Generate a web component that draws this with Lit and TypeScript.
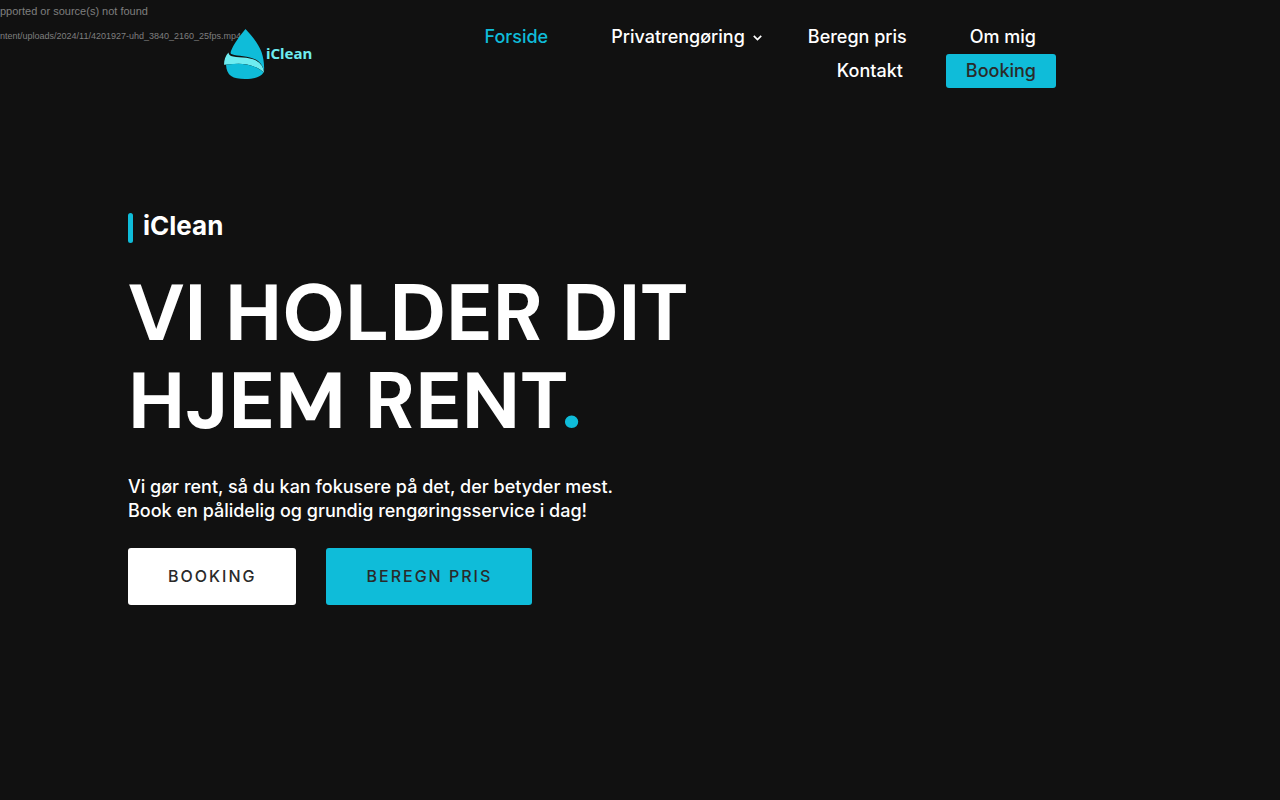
import { LitElement, html, css, svg } from "lit";
import { customElement } from "lit/decorators.js";

const links = [
  { label: "Forside", kind: "active" },
  { label: "Privatrengøring", kind: "parent" },
  { label: "Beregn pris", kind: "" },
  { label: "Om mig", kind: "" },
  { label: "Kontakt", kind: "" },
  { label: "Booking", kind: "cta" },
];

const chevron = svg`<svg class="chevron" viewBox="0 0 9 6" aria-hidden="true">
  <path d="M0.800 0.800l3.700 3.700 3.700-3.700" fill="none" stroke="currentColor" stroke-width="1.700"/>
</svg>`;

@customElement("site-header")
export class SiteHeader extends LitElement {
  static styles = css`
    :host {
      display: block;
      position: relative;
    }
    .bar {
      width: 65%;
      margin: 0 auto;
      padding: 20px 0;
      display: flex;
      justify-content: space-between;
      align-items: center;
    }
    .logo {
      display: flex;
      align-items: center;
      text-decoration: none;
      color: #6eecf0;
      font: 700 15px/20px "Noto Sans", "Open Sans", sans-serif;
    }
    .name {
      padding-bottom: 2px;
    }
    .drop {
      width: 42px;
      height: 52px;
      display: block;
    }
    .nav {
      width: 75%;
    }
    .menu {
      margin: 0;
      padding: 0;
      list-style: none;
      display: flex;
      flex-wrap: wrap;
      justify-content: flex-end;
      column-gap: 23px;
    }
    .link {
      display: block;
      position: relative;
      padding: 0 20px;
      border-radius: 3px;
      color: #fff;
      font: 500 18px/34px Inter, sans-serif;
      text-decoration: none;
      white-space: nowrap;
    }
    .active {
      color: #0fbcd9;
    }
    .cta {
      background: #0fbcd9;
      color: #2a2a2a;
    }
    .chevron {
      position: absolute;
      right: 3px;
      top: 15px;
      width: 9px;
      height: 6px;
    }
  `;

  render() {
    return html`
      <header class="bar">
        <a class="logo" href="#">
          <svg class="drop" viewBox="0 0 42 52" aria-hidden="true">
            <path fill="#0fbcd9" d="M21.500 1C15.500 8 9.500 16.500 7 23C6.300 25 6.500 25.600 8 26.200C14 28.400 27 27.500 34 33C38 36 39.500 40 40 44C40.500 36 39.500 30 37.500 24C34 15 27.500 7.500 21.500 1Z"/>
            <path fill="#6eecf0" d="M4.500 24.500C1.500 27.500 0 32 0 36.800C7 36.500 14 34.800 23 36.600C30 38 36.500 41 40 44.800C39.500 39 37 35.500 32 32.500C25 28.500 12 30 7 28C5.500 27.300 4.500 26 4.500 24.500Z"/>
            <path fill="#0fbcd9" d="M2 36.500C8 36.800 13 34.900 22 36.400C30 37.700 36 41 39.500 44.500C37 49 30 51 21 51C9 51 2.500 48 2 36.500Z"/>
          </svg>
          <span class="name">iClean</span>
        </a>
        <nav class="nav">
          <ul class="menu">
            ${links.map(
              (l) => html`<li>
                <a class="link ${l.kind}" href="#">${l.label}${l.kind === "parent" ? chevron : ""}</a>
              </li>`
            )}
          </ul>
        </nav>
      </header>
    `;
  }
}

@customElement("site-hero")
export class SiteHero extends LitElement {
  static styles = css`
    :host {
      display: block;
      width: 80%;
      margin: 0 auto;
      padding-top: 105px;
      color: #fff;
      font-family: Inter, sans-serif;
    }
    .brand {
      display: flex;
      gap: 10px;
      margin: 0;
      font-size: 26px;
      line-height: 26px;
      font-weight: 700;
    }
    .brand::before {
      content: "";
      width: 5px;
      height: 30px;
      border-radius: 3px;
      background: #0fbcd9;
    }
    .title {
      max-width: 620px;
      margin: 26px 0 0;
      font-family: "DM Sans", Inter, sans-serif;
      font-size: 80px;
      line-height: 88px;
      font-weight: 700;
      text-transform: uppercase;
    }
    .dot {
      color: #0fbcd9;
    }
    .lead {
      max-width: 520px;
      margin: 30px 0 0;
      font-size: 18px;
      line-height: 24px;
      font-weight: 500;
    }
    .actions {
      display: flex;
      gap: 30px;
      margin-top: 25px;
    }
    .button {
      padding: 20px 40px;
      border-radius: 3px;
      background: #fff;
      color: #2a2a2a;
      font-size: 16px;
      line-height: 17px;
      font-weight: 500;
      letter-spacing: 2px;
      text-transform: uppercase;
      text-decoration: none;
    }
    .primary {
      background: #0fbcd9;
    }
  `;

  render() {
    return html`
      <p class="brand">iClean</p>
      <h1 class="title">Vi holder dit hjem rent<span class="dot">.</span></h1>
      <p class="lead">
        Vi gør rent, så du kan fokusere på det, der betyder mest.<br />Book en pålidelig og grundig
        rengøringsservice i dag!
      </p>
      <div class="actions">
        <a class="button" href="#">Booking</a>
        <a class="button primary" href="#">Beregn pris</a>
      </div>
    `;
  }
}

@customElement("app-root")
export class AppRoot extends LitElement {
  static styles = css`
    :host {
      display: block;
      position: relative;
      min-height: 100vh;
      background: #111;
    }
    .notice {
      position: absolute;
      left: 0;
      top: 0;
      color: #7f7f7f;
      font-family: "Liberation Sans", Arial, sans-serif;
      white-space: nowrap;
    }
    .message {
      margin: 0;
      font-size: 11px;
      line-height: 23px;
    }
    .file {
      display: block;
      color: inherit;
      font-size: 9px;
      line-height: 26px;
      text-decoration: none;
    }
  `;

  render() {
    return html`
      <div class="notice">
        <p class="message">pported or source(s) not found</p>
        <a class="file" href="#">ntent/uploads/2024/11/4201927-uhd_3840_2160_25fps.mp4</a>
      </div>
      <site-header></site-header>
      <main><site-hero></site-hero></main>
    `;
  }
}
